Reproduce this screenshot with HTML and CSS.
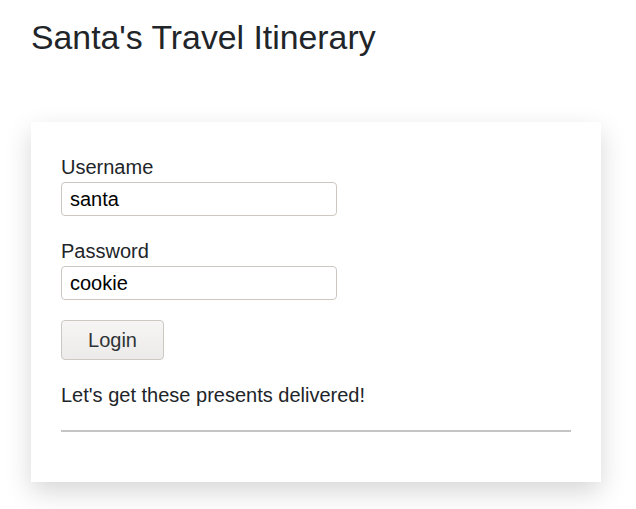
FILE: index.html
```html
<!DOCTYPE html>
<html lang="en">
<head>
<meta charset="utf-8">
<title>Santa's Travel Itinerary</title>
<link rel="stylesheet" href="styles.css">
</head>
<body>
<div class="page">
  <h1 class="title">Santa's Travel Itinerary</h1>
  <div class="card">
    <form class="login-form">
      <label class="field-label" for="username">Username</label>
      <input class="field-input" id="username" type="text" value="santa">
      <label class="field-label second" for="password">Password</label>
      <input class="field-input" id="password" type="text" value="cookie">
      <button class="login-btn" type="button">Login</button>
    </form>
    <p class="message">Let's get these presents delivered!</p>
    <hr class="divider">
  </div>
</div>
</body>
</html>
```

FILE: styles.css
```css
html, body {
  margin: 0;
  padding: 0;
  background: #ffffff;
}

body {
  font-family: "Liberation Sans", Arial, sans-serif;
  color: #212529;
}

.page {
  padding: 19px 35px 40px 31px;
}

.title {
  margin: 0;
  font-size: 33.8px;
  font-weight: 400;
  line-height: 37px;
  color: #212529;
}

.card {
  margin-top: 66px;
  width: 570px;
  box-sizing: border-box;
  background: #ffffff;
  padding: 34px 30px 50px 30px;
  box-shadow: 0 10px 25px rgba(0, 0, 0, 0.16);
}

.login-form {
  display: flex;
  flex-direction: column;
  align-items: flex-start;
}

.field-label {
  font-size: 20px;
  line-height: 23px;
  color: #212529;
}

.field-label.second {
  margin-top: 24px;
}

.field-input {
  margin-top: 3px;
  width: 276px;
  height: 34px;
  box-sizing: border-box;
  padding: 0 8px;
  border: 1px solid #cdc7c2;
  border-radius: 4px;
  font-family: "Liberation Sans", Arial, sans-serif;
  font-size: 20px;
  color: #000000;
  background: #ffffff;
  outline: none;
}

.login-btn {
  margin-top: 20px;
  width: 103px;
  height: 40px;
  box-sizing: border-box;
  border: 1px solid #cdc7c2;
  border-radius: 4px;
  background: linear-gradient(#f6f5f4, #edebe9);
  font-family: "Liberation Sans", Arial, sans-serif;
  font-size: 20px;
  color: #2e3436;
  padding: 0;
}

.message {
  margin: 24px 0 0 0;
  font-size: 20px;
  line-height: 23px;
  color: #212529;
}

.divider {
  margin: 23px 0 0 0;
  border: 0;
  height: 2px;
  background: #c4c4c4;
}
```
